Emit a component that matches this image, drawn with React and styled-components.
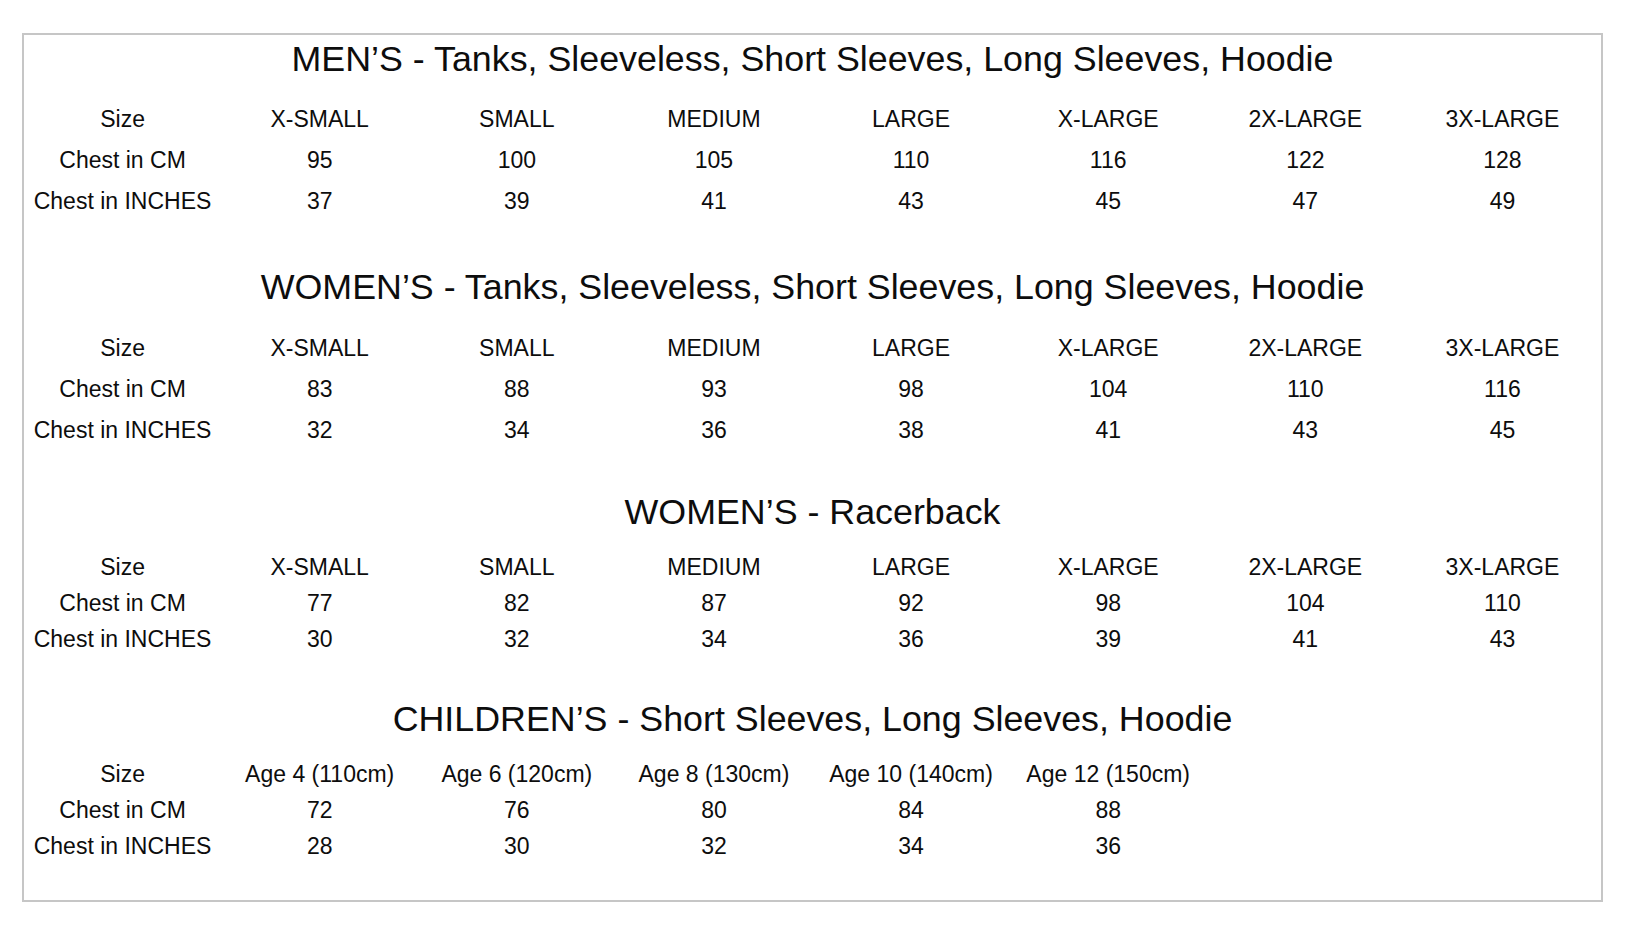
import React from "react";
import styled, { createGlobalStyle } from "styled-components";

const GlobalStyle = createGlobalStyle`
  html, body {
    margin: 0;
    padding: 0;
    background: #ffffff;
  }
  body {
    font-family: "Liberation Sans", Arial, Helvetica, sans-serif;
    color: #0d0d0d;
  }
`;

const Page = styled.div`
  width: 1626px;
  min-height: 926px;
  box-sizing: border-box;
  padding: 33px 0 0 22px;
  background: #ffffff;
`;

const Chart = styled.div`
  width: 1581px;
  height: 869px;
  box-sizing: border-box;
  border: 2px solid #c6c6c6;
  background: #ffffff;
  display: flex;
  flex-direction: column;
  padding-bottom: 35px;
`;

const Section = styled.section`
  margin-top: ${(p) => p.$mt}px;
  display: flex;
  flex-direction: column;
  gap: ${(p) => p.$gap}px;
`;

const Title = styled.h2`
  margin: 0;
  height: 40px;
  line-height: 40px;
  font-size: 35.8px;
  font-weight: 400;
  text-align: center;
  color: #0d0d0d;
  white-space: nowrap;
`;

const Grid = styled.div`
  display: grid;
  grid-template-columns: repeat(8, 1fr);
  grid-auto-rows: ${(p) => p.$rowH}px;
`;

const Cell = styled.div`
  display: flex;
  align-items: center;
  justify-content: center;
  padding-top: 2px;
  font-size: 23px;
  line-height: 1;
  color: #0d0d0d;
  white-space: nowrap;
`;

const sections = [
  {
    title: "MEN’S - Tanks, Sleeveless, Short Sleeves, Long Sleeves, Hoodie",
    mt: 4,
    gap: 19,
    rowH: 41,
    sizes: ["X-SMALL", "SMALL", "MEDIUM", "LARGE", "X-LARGE", "2X-LARGE", "3X-LARGE"],
    cm: ["95", "100", "105", "110", "116", "122", "128"],
    inch: ["37", "39", "41", "43", "45", "47", "49"],
  },
  {
    title: "WOMEN’S - Tanks, Sleeveless, Short Sleeves, Long Sleeves, Hoodie",
    mt: 46,
    gap: 20,
    rowH: 41,
    sizes: ["X-SMALL", "SMALL", "MEDIUM", "LARGE", "X-LARGE", "2X-LARGE", "3X-LARGE"],
    cm: ["83", "88", "93", "98", "104", "110", "116"],
    inch: ["32", "34", "36", "38", "41", "43", "45"],
  },
  {
    title: "WOMEN’S - Racerback",
    mt: 42,
    gap: 16,
    rowH: 36,
    sizes: ["X-SMALL", "SMALL", "MEDIUM", "LARGE", "X-LARGE", "2X-LARGE", "3X-LARGE"],
    cm: ["77", "82", "87", "92", "98", "104", "110"],
    inch: ["30", "32", "34", "36", "39", "41", "43"],
  },
  {
    title: "CHILDREN’S - Short Sleeves, Long Sleeves, Hoodie",
    mt: 43,
    gap: 16,
    rowH: 36,
    sizes: ["Age 4 (110cm)", "Age 6 (120cm)", "Age 8 (130cm)", "Age 10 (140cm)", "Age 12 (150cm)", "", ""],
    cm: ["72", "76", "80", "84", "88", "", ""],
    inch: ["28", "30", "32", "34", "36", "", ""],
  },
];

function Row({ label, values }) {
  return (
    <>
      <Cell>{label}</Cell>
      {values.map((v, i) => (
        <Cell key={i}>{v}</Cell>
      ))}
    </>
  );
}

export default function App() {
  return (
    <>
      <GlobalStyle />
      <Page>
        <Chart>
          {sections.map((s) => (
            <Section key={s.title} $mt={s.mt} $gap={s.gap}>
              <Title>{s.title}</Title>
              <Grid $rowH={s.rowH}>
                <Row label="Size" values={s.sizes} />
                <Row label="Chest in CM" values={s.cm} />
                <Row label="Chest in INCHES" values={s.inch} />
              </Grid>
            </Section>
          ))}
        </Chart>
      </Page>
    </>
  );
}
